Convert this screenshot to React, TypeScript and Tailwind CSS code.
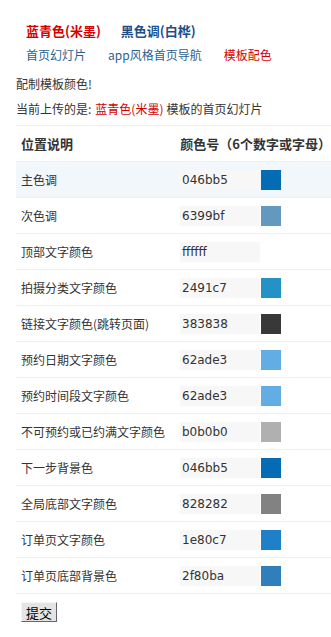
const rows = [
  { label: "主色调", color: "046bb5" },
  { label: "次色调", color: "6399bf" },
  { label: "顶部文字颜色", color: "ffffff" },
  { label: "拍摄分类文字颜色", color: "2491c7" },
  { label: "链接文字颜色(跳转页面)", color: "383838" },
  { label: "预约日期文字颜色", color: "62ade3" },
  { label: "预约时间段文字颜色", color: "62ade3" },
  { label: "不可预约或已约满文字颜色", color: "b0b0b0" },
  { label: "下一步背景色", color: "046bb5" },
  { label: "全局底部文字颜色", color: "828282" },
  { label: "订单页文字颜色", color: "1e80c7" },
  { label: "订单页底部背景色", color: "2f80ba" },
];

function App() {
  return (
    <div
      className="w-[331px] min-h-[637px] bg-white text-[12px] text-[#333] pt-[20px]"
      style={{ fontFamily: '"Noto Sans CJK SC", "Noto Sans", sans-serif' }}
    >
      <div className="flex gap-[20px] pl-[26px] h-[20px] items-center text-[13px] font-bold leading-none">
        <a href="#" className="text-[#d40000]">蓝青色(米墨)</a>
        <a href="#" className="text-[#1d4e8a]">黑色调(白桦)</a>
      </div>
      <div className="flex gap-[22px] pl-[26px] mt-[5px] h-[20px] items-center text-[12px] leading-none">
        <a href="#" className="text-[#2d5f91]">首页幻灯片</a>
        <a href="#" className="text-[#2d5f91]">app风格首页导航</a>
        <a href="#" className="text-[#d40000]">模板配色</a>
      </div>
      <div className="pl-[16px] mt-[9px] h-[20px] flex items-center leading-none">配制模板颜色!</div>
      <div className="pl-[16px] mt-[5px] h-[20px] flex items-center leading-none">
        当前上传的是:<span className="text-[#d40000] ml-[4px]">蓝青色(米墨)</span>
        <span className="ml-[3px]">模板的首页幻灯片</span>
      </div>
      <div className="ml-[16px] mt-[6px] border-t border-[#eeeeee]">
        <div className="flex h-[36px] items-center border-b border-[#eeeeee] text-[13px] font-bold">
          <div className="w-[164px] pl-[5px]">位置说明</div>
          <div className="pl-[2px] whitespace-nowrap">颜色号（6个数字或字母）</div>
        </div>
        {rows.map((row, i) => (
          <div
            key={i}
            className={
              i === 0
                ? "flex h-[36px] items-center border-b border-[#eeeeee] bg-[#f1f7fb]"
                : "flex h-[36px] items-center border-b border-[#eeeeee]"
            }
          >
            <div className="w-[164px] pl-[5px] whitespace-nowrap">{row.label}</div>
            <div
              className="w-[80px] h-[20px] bg-[#f7f7f7] flex items-center pl-[2px] text-[#333]"
              style={{ fontFamily: '"DejaVu Sans", sans-serif' }}
            >
              {row.color}
            </div>
            {row.color !== "ffffff" && (
              <div className="w-[20px] h-[20px] ml-[1px]" style={{ backgroundColor: "#" + row.color }} />
            )}
          </div>
        ))}
      </div>
      <div className="pl-[21px] pt-[8px]">
        <button className="w-[36px] h-[20px] bg-[#e4e4e4] border border-t-[#f5f5f5] border-l-[#f5f5f5] border-r-[#666] border-b-[#666] text-[13px] text-black leading-none">
          提交
        </button>
      </div>
    </div>
  );
}

export default App;
